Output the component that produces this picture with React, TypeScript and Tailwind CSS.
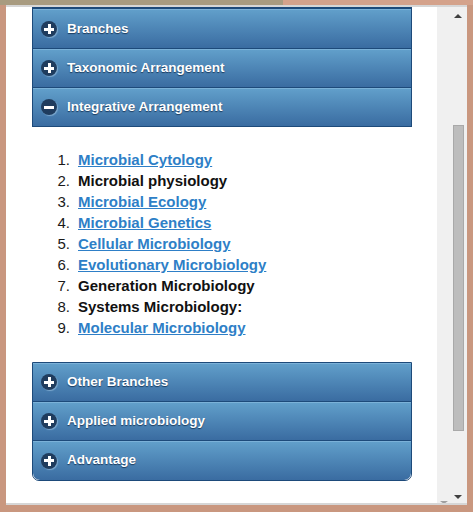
import React from 'react';

type Item = { label: string; link: boolean };

const items: Item[] = [
    { label: 'Microbial Cytology', link: true },
    { label: 'Microbial physiology', link: false },
    { label: 'Microbial Ecology', link: true },
    { label: 'Microbial Genetics', link: true },
    { label: 'Cellular Microbiology', link: true },
    { label: 'Evolutionary Microbiology', link: true },
    { label: 'Generation Microbiology', link: false },
    { label: 'Systems Microbiology:', link: false },
    { label: 'Molecular Microbiology', link: true },
];

function ToggleIcon({ open }: { open?: boolean }) {
    return (
        <span className="relative flex h-[16px] w-[16px] shrink-0 items-center justify-center rounded-full bg-[#1f3c5e] shadow-[1px_1px_1px_rgba(170,205,235,0.55)]">
            <span className="absolute h-[3px] w-[10px] bg-white" />
            {!open && <span className="absolute h-[10px] w-[3px] bg-white" />}
        </span>
    );
}

function Header({ title, open, first, last }: { title: string; open?: boolean; first?: boolean; last?: boolean }) {
    return (
        <div
            className={
                'flex items-center gap-[10px] border-[#1d4a7a] bg-gradient-to-b from-[#62a0cb] to-[#3a6ca1] pl-[8px] shadow-[inset_0_1px_0_rgba(140,190,225,0.6)] ' +
                (first ? 'h-[42px] border-t-2 pt-[1px] ' : 'h-[39px] ') +
                (last ? 'rounded-b-[7px] ' : 'border-b ')
            }
        >
            <ToggleIcon open={open} />
            <span className="text-[13.5px] font-bold text-white [text-shadow:0_1px_1px_#1b3b5e]">{title}</span>
        </div>
    );
}

export default function App() {
    return (
        <div className="flex h-[512px] w-[473px] flex-col bg-[#c9977f] font-['Liberation_Sans',Arial,sans-serif]">
            {/* top window strip */}
            <div className="flex h-[5px]">
                <div className="w-[283px] bg-[#a89b80]" />
                <div className="flex-1 bg-[#d4a28b]" />
            </div>

            <div className="flex h-[500px]">
                <div className="w-[6px]" />
                <div className="flex w-[461px] flex-col border-y-2 border-[#d6d6d6]">
                    <div className="flex flex-1 overflow-hidden">
                        {/* page */}
                        <div className="w-[431px] bg-white pl-[26px]">
                            <div className="w-[380px] border-x border-[#1d4a7a]">
                                <Header title="Branches" first />
                                <Header title="Taxonomic Arrangement" />
                                <Header title="Integrative Arrangement" open />
                            </div>

                            <ol className="pb-[24px] pl-[18px] pt-[22px] text-[15px] leading-[21px]">
                                {items.map((item, i) => (
                                    <li key={item.label} className="flex">
                                        <span className="w-[20px] text-right text-[#1a1a1a]">{i + 1}.</span>
                                        <span className="ml-[8px]">
                                            {item.link ? (
                                                <a className="font-bold text-[#2e7fc7] underline" href="#">{item.label}</a>
                                            ) : (
                                                <span className="font-bold text-[#111]">{item.label}</span>
                                            )}
                                        </span>
                                    </li>
                                ))}
                            </ol>

                            <div className="w-[380px] overflow-hidden rounded-b-[7px] border border-[#1d4a7a]">
                                <Header title="Other Branches" />
                                <Header title="Applied microbiology" />
                                <Header title="Advantage" last />
                            </div>
                        </div>

                        {/* scrollbar */}
                        <div className="relative w-[30px] bg-[#f0f0f0]">
                            <span className="absolute left-[17px] top-[7px] h-0 w-0 border-x-[4px] border-b-[4px] border-x-transparent border-b-[#404040]" />
                            <div className="absolute left-[16px] top-[118px] h-[306px] w-[11px] border border-[#a9a9a9] bg-[#bdbdbd]" />
                            <span className="absolute bottom-[4px] left-[17px] h-0 w-0 border-x-[4px] border-t-[4px] border-x-transparent border-t-[#404040]" />
                            <span className="absolute -bottom-[1px] left-[3px] h-0 w-0 border-x-[4px] border-t-[3px] border-x-transparent border-t-[#a0a0a0]" />
                        </div>
                    </div>
                </div>
                <div className="w-[6px]" />
            </div>

            <div className="h-[7px]" />
        </div>
    );
}
